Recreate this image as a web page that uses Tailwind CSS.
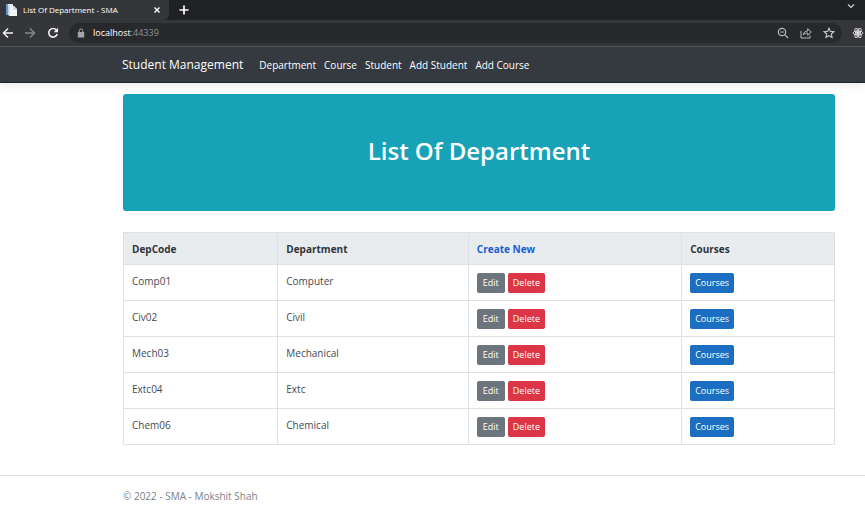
<!DOCTYPE html>
<html lang="en">
<head>
<meta charset="utf-8">
<meta name="viewport" content="width=device-width, initial-scale=1">
<title>List Of Department - SMA</title>
<script src="https://cdn.jsdelivr.net/npm/@tailwindcss/browser@4"></script>
</head>
<body class="bg-white font-['Open_Sans','Noto_Sans',sans-serif] text-[10px] leading-4 text-[#454a4f]">

<!-- Browser window -->
<div class="bg-[#202124] text-white">
  <div class="flex h-5 items-center">
    <div class="flex h-5 w-[169px] items-center rounded-br-md bg-[#35363a] pr-2 pl-[5px] text-[8px]">
      <svg class="mr-[6px] h-3 w-3 shrink-0" viewBox="0 0 12 12" aria-hidden="true"><path d="M1 0h7v11H1z" fill="#dbe9f4"/><path d="M1 0h2v11H1z" fill="#5b9bd0"/><path d="M4 2h5l3 3v7H4z" fill="#f3f4f5"/><path d="M4 2v10M9 2v3h3" fill="none" stroke="#a9b4bd" stroke-width=".8"/></svg>
      <span class="grow font-medium whitespace-nowrap">List Of Department - SMA</span>
      <button class="flex h-4 w-2 items-center justify-center" aria-label="Close tab"><svg class="h-2 w-2" viewBox="0 0 8 8" fill="none" stroke="#fff" stroke-width="1.4"><path d="M1.5 1.5l5 5M6.500 1.500l-5 5"/></svg></button>
    </div>
    <button class="ml-[7px] flex h-4 w-4 items-center justify-center" aria-label="New tab"><svg class="h-3 w-3" viewBox="0 0 12 12" fill="none" stroke="#fff" stroke-width="1.7"><path d="M6 1.500v9M1.500 6h9"/></svg></button>
    <button class="mr-2 ml-auto flex h-3 w-3 items-center justify-center self-start" aria-label="Search tabs"><svg class="h-2 w-2" viewBox="0 0 8 8" fill="none" stroke="#d0d1d3" stroke-width="1.200"><path d="M1 2.500l3 3 3-3"/></svg></button>
  </div>
  <div class="flex h-[27px] items-center border-b border-[#55565a] bg-[#35363a]">
    <button class="flex w-4 shrink-0 justify-center" aria-label="Back"><svg class="h-3 w-3" viewBox="0 0 12 12" fill="none" stroke="#f1f1f1" stroke-width="1.500"><path d="M11 6H1.500M6 1.500L1.500 6 6 10.500"/></svg></button>
    <button class="ml-[6px] flex w-4 shrink-0 justify-center" aria-label="Forward"><svg class="h-3 w-3" viewBox="0 0 12 12" fill="none" stroke="#85868a" stroke-width="1.500"><path d="M1 6h9.500M6 1.500L10.500 6 6 10.500"/></svg></button>
    <button class="ml-[7px] flex w-4 shrink-0 justify-center" aria-label="Reload"><svg class="h-3 w-3" viewBox="0 0 12 12" fill="none" stroke="#f1f1f1" stroke-width="1.600"><path d="M9.500 3.200A4.300 4.300 0 1 0 10.200 7"/><path d="M11 .8v4.400H6.600z" fill="#f1f1f1" stroke="none"/></svg></button>
    <div class="ml-2 flex h-5 grow items-center rounded-full bg-[#28292c] pr-[7px] pl-2">
      <svg class="mr-2 h-[10px] w-2 shrink-0" viewBox="0 0 8 10" aria-hidden="true"><path d="M.8 4h6.400v5.500H.8z" fill="#a2a4a8"/><path d="M2.300 4.500V2.600a1.700 1.700 0 0 1 3.400 0v1.900" fill="none" stroke="#a2a4a8"/></svg>
      <a href="#" class="grow text-[9px]">localhost<span class="text-[#919397]">:44339</span></a>
      <button aria-label="Zoom out"><svg class="h-3 w-3" viewBox="0 0 12 12" fill="none" stroke="#b9babd" stroke-width="1.200"><circle cx="5" cy="5" r="3.700"/><path d="M7.700 7.700l3.300 3.300M3.200 5h3.600"/></svg></button>
      <button class="ml-[11px]" aria-label="Share"><svg class="h-3 w-3" viewBox="0 0 12 12" fill="none" stroke="#b9babd" stroke-width="1"><path d="M1 4v7h9V8.500M3.300 8c.4-2.800 2-4 4.400-4V1.700l3.500 3.300-3.500 3.300V6C5.800 6 4.500 6.500 3.300 8z"/></svg></button>
      <button class="ml-[11px]" aria-label="Bookmark"><svg class="h-3 w-3" viewBox="0 0 12 12" fill="none" stroke="#c9cacc" stroke-width="1.100"><path d="M6 1.200l1.400 3.200 3.500.3-2.600 2.300.8 3.500L6 8.700l-3.100 1.800.8-3.500L1.100 4.700l3.500-.3z"/></svg></button>
    </div>
    <button class="mr-px ml-[10px]" aria-label="React Developer Tools"><svg class="h-3 w-3" viewBox="0 0 12 12" fill="none" stroke="#d5d5d7" stroke-width="1"><ellipse cx="6" cy="6" rx="5" ry="2"/><ellipse cx="6" cy="6" rx="5" ry="2" transform="rotate(60 6 6)"/><ellipse cx="6" cy="6" rx="5" ry="2" transform="rotate(120 6 6)"/><circle cx="6" cy="6" r="1.200" fill="#fff"/></svg></button>
  </div>
</div>

<!-- Site navigation -->
<header class="border-b border-[#1c2233] bg-[#343a40] shadow-[0_3px_8px_rgba(0,0,0,0.08)]">
  <nav class="flex h-[35px] items-center gap-2 pr-[30px] pl-[122px] text-white">
    <a href="#" class="mr-2 text-[12px]">Student Management</a>
    <a href="#">Department</a>
    <a href="#">Course</a>
    <a href="#">Student</a>
    <a href="#">Add Student</a>
    <a href="#">Add Course</a>
  </nav>
</header>

<main class="pt-[11px] pr-[30px] pb-[30px] pl-[123px]">
  <div class="rounded-[3px] bg-[#17a2b8] pt-[39px] pb-[42px] text-center text-white">
    <h1 class="text-[24px] leading-9 font-semibold">List Of Department</h1>
  </div>

  <table class="mt-[21px] w-full table-fixed border-collapse border border-[#dee2e6] [&_td]:border [&_td]:border-[#dee2e6] [&_td]:px-2 [&_td]:pt-2 [&_td]:pb-[7px] [&_td]:align-top [&_th]:border [&_th]:border-[#dee2e6] [&_th]:px-2 [&_th]:text-left">
    <colgroup><col class="w-[21.700%]"><col class="w-[26.800%]"><col class="w-[30%]"><col></colgroup>
    <thead class="bg-[#e9ecef] text-[#30353a]">
      <tr class="h-8"><th>DepCode</th><th>Department</th><th><a href="#" class="text-[#1a5fd0]">Create New</a></th><th>Courses</th></tr>
    </thead>
    <tbody>
      <tr class="h-9"><td>Comp01</td><td>Computer</td>
        <td><div class="flex gap-[3px] text-[9px] text-white"><button class="h-5 rounded-xs bg-[#6c757d] px-[6px]">Edit</button><button class="h-5 rounded-xs bg-[#dc3545] px-[5px]">Delete</button></div></td>
        <td><div class="flex text-[9px] text-white"><button class="h-5 rounded-xs bg-[#1b6ec2] px-[5px]">Courses</button></div></td></tr>
      <tr class="h-9"><td>Civ02</td><td>Civil</td>
        <td><div class="flex gap-[3px] text-[9px] text-white"><button class="h-5 rounded-xs bg-[#6c757d] px-[6px]">Edit</button><button class="h-5 rounded-xs bg-[#dc3545] px-[5px]">Delete</button></div></td>
        <td><div class="flex text-[9px] text-white"><button class="h-5 rounded-xs bg-[#1b6ec2] px-[5px]">Courses</button></div></td></tr>
      <tr class="h-9"><td>Mech03</td><td>Mechanical</td>
        <td><div class="flex gap-[3px] text-[9px] text-white"><button class="h-5 rounded-xs bg-[#6c757d] px-[6px]">Edit</button><button class="h-5 rounded-xs bg-[#dc3545] px-[5px]">Delete</button></div></td>
        <td><div class="flex text-[9px] text-white"><button class="h-5 rounded-xs bg-[#1b6ec2] px-[5px]">Courses</button></div></td></tr>
      <tr class="h-9"><td>Extc04</td><td>Extc</td>
        <td><div class="flex gap-[3px] text-[9px] text-white"><button class="h-5 rounded-xs bg-[#6c757d] px-[6px]">Edit</button><button class="h-5 rounded-xs bg-[#dc3545] px-[5px]">Delete</button></div></td>
        <td><div class="flex text-[9px] text-white"><button class="h-5 rounded-xs bg-[#1b6ec2] px-[5px]">Courses</button></div></td></tr>
      <tr class="h-9"><td>Chem06</td><td>Chemical</td>
        <td><div class="flex gap-[3px] text-[9px] text-white"><button class="h-5 rounded-xs bg-[#6c757d] px-[6px]">Edit</button><button class="h-5 rounded-xs bg-[#dc3545] px-[5px]">Delete</button></div></td>
        <td><div class="flex text-[9px] text-white"><button class="h-5 rounded-xs bg-[#1b6ec2] px-[5px]">Courses</button></div></td></tr>
    </tbody>
  </table>
</main>

<footer class="border-t border-[#dee2e6] pt-3 pr-[30px] pl-[123px] text-[#7b8288]">© 2022 - SMA - Mokshit Shah</footer>
</body>
</html>
